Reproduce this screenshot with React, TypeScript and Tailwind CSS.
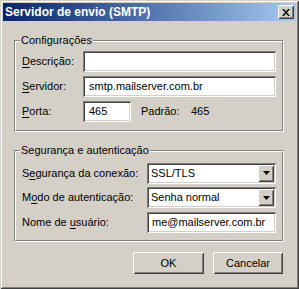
import React from "react";

const sunken =
  "bg-white shadow-[inset_1px_1px_0_#808080,inset_-1px_-1px_0_#ffffff,inset_2px_2px_0_#404040,inset_-2px_-2px_0_#d4d0c8]";
const raised =
  "bg-[#d4d0c8] shadow-[inset_1px_1px_0_#ffffff,inset_-1px_-1px_0_#404040,inset_2px_2px_0_#d4d0c8,inset_-2px_-2px_0_#808080]";

function Label({ pre, k, post, w }: { pre: string; k: string; post: string; w: string }) {
  return (
    <span className={`${w} shrink-0 whitespace-nowrap`}>
      {pre}
      <span className="underline underline-offset-[2px]">{k}</span>
      {post}
    </span>
  );
}

function Group({ title, children }: { title: string; children: React.ReactNode }) {
  return (
    <div className="relative border border-t-[#808080] border-l-[#808080] border-b-white border-r-white">
      <div className="border border-t-white border-l-white border-b-[#808080] border-r-[#808080] h-[90px]">
        {children}
      </div>
      <span className="absolute -top-[7px] left-[5px] px-[1px] bg-[#d4d0c8] leading-[13px]">
        {title}
      </span>
    </div>
  );
}

function Arrow() {
  return (
    <div className={`${raised} w-[16px] h-[17px] flex items-center justify-center`}>
      <svg width="7" height="4" viewBox="0 0 7 4">
        <path d="M0 0h7L3.5 4z" fill="#000" />
      </svg>
    </div>
  );
}

function Select({ value }: { value: string }) {
  return (
    <div className={`${sunken} w-[129px] h-[21px] flex items-center pl-[4px] pr-[2px]`}>
      <span className="flex-1">{value}</span>
      <Arrow />
    </div>
  );
}

export default function App() {
  return (
    <div
      className="w-[299px] h-[289px] bg-[#d4d0c8] text-black text-[11px] leading-[13px] p-[3px] flex flex-col shadow-[inset_1px_1px_0_#d4d0c8,inset_-1px_-1px_0_#404040,inset_2px_2px_0_#ffffff,inset_-2px_-2px_0_#808080]"
      style={{ fontFamily: '"Liberation Sans", Arial, sans-serif' }}
    >
      {/* Title bar */}
      <div className="h-[18px] bg-gradient-to-r from-[#0a246a] to-[#a6caf0] flex items-center pl-[2px] pr-[2px]">
        <span className="flex-1 text-white font-bold text-[12px]">Servidor de envio (SMTP)</span>
        <div className={`${raised} w-[16px] h-[14px] flex items-center justify-center`}>
          <svg width="8" height="7" viewBox="0 0 8 7">
            <path d="M0 0h2l2 2.5L6 0h2L5 3.5 8 7H6L4 4.5 2 7H0l3-3.5z" fill="#000" />
          </svg>
        </div>
      </div>

      {/* Content */}
      <div className="flex flex-col pl-[11px] pr-[12px] pt-[19px]">
        <Group title="Configurações">
          <div className="flex flex-col pl-[6px] pr-[6px] pt-[9px] gap-[4px]">
            <div className="flex items-center h-[21px]">
              <Label w="w-[61px]" pre="" k="D" post="escrição:" />
              <div className={`${sunken} flex-1 h-[21px]`} />
            </div>
            <div className="flex items-center h-[21px]">
              <Label w="w-[61px]" pre="" k="S" post="ervidor:" />
              <div className={`${sunken} flex-1 h-[21px] flex items-center pl-[6px]`}>smtp.mailserver.com.br</div>
            </div>
            <div className="flex items-center h-[21px]">
              <Label w="w-[61px]" pre="" k="P" post="orta:" />
              <div className={`${sunken} w-[48px] h-[21px] flex items-center pl-[6px]`}>465</div>
              <span className="ml-[10px] w-[50px]">Padrão:</span>
              <span>465</span>
            </div>
          </div>
        </Group>

        <div className="h-[18px]" />

        <Group title="Segurança e autenticação">
          <div className="flex flex-col pl-[6px] pr-[6px] pt-[11px] gap-[4px]">
            <div className="flex items-center h-[20px]">
              <Label w="w-[125px]" pre="S" k="e" post="gurança da conexão:" />
              <Select value="SSL/TLS" />
            </div>
            <div className="flex items-center h-[21px]">
              <Label w="w-[125px]" pre="M" k="o" post="do de autenticação:" />
              <Select value="Senha normal" />
            </div>
            <div className="flex items-center h-[21px]">
              <Label w="w-[125px]" pre="Nome de " k="u" post="suário:" />
              <div className={`${sunken} w-[129px] h-[21px] flex items-center pl-[5px]`}>me@mailserver.com.br</div>
            </div>
          </div>
        </Group>

        <div className="flex justify-end gap-[9px] mt-[10px] pr-[1px]">
          <button className={`${raised} w-[71px] h-[22px] flex items-center justify-center`}>OK</button>
          <button className={`${raised} w-[70px] h-[22px] flex items-center justify-center`}>Cancelar</button>
        </div>
      </div>
    </div>
  );
}
